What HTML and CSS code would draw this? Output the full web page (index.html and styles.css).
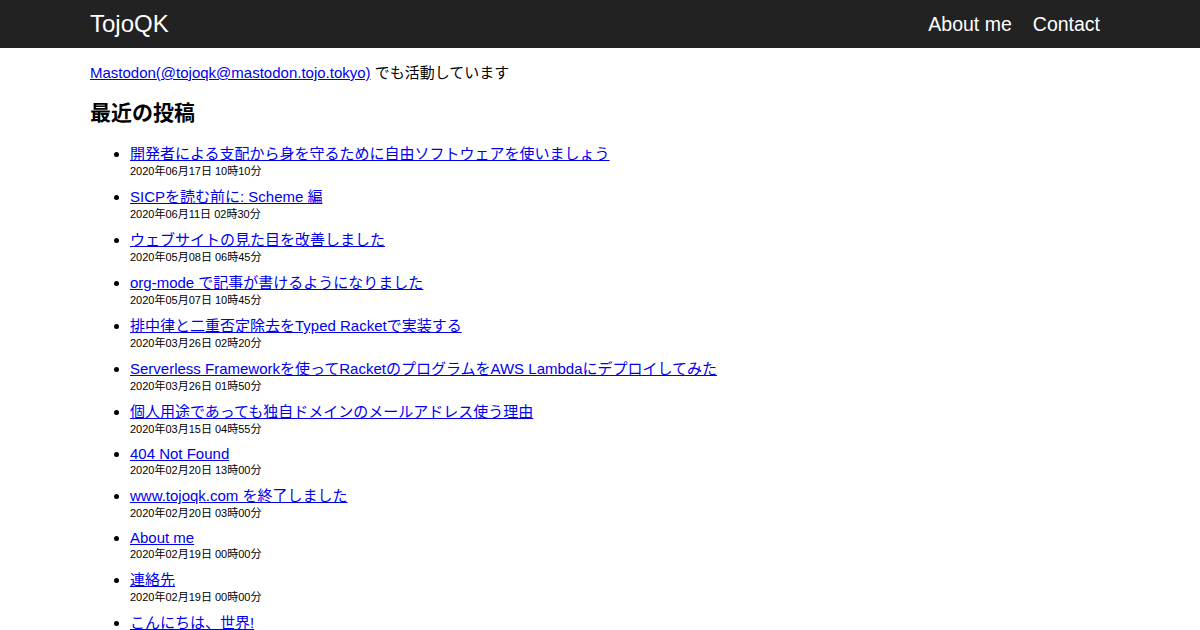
FILE: index.html
```
<!DOCTYPE html>
<html lang="ja">
<head>
    <meta charset="UTF-8">
    <meta name="viewport" content="width=device-width, initial-scale=1.0">
    <link rel="stylesheet" href="styles.css">
    <title>TojoQK</title>
</head>
<body>
    <div class="header">
        <div class="container header-inner">
            <a href="#" class="site-title">TojoQK</a>
            <div class="nav">
                <a href="#" class="nav-item">About me</a>
                <a href="#" class="nav-item">Contact</a>
            </div>
        </div>
    </div>
    <div class="container main">
        <p class="intro"><a href="#">Mastodon(@tojoqk@mastodon.tojo.tokyo)</a> でも活動しています</p>
        <h2 class="section-title">最近の投稿</h2>
        <ul class="posts">
            <li><a href="#">開発者による支配から身を守るために自由ソフトウェアを使いましょう</a><div class="date">2020年06月17日 10時10分</div></li>
            <li><a href="#">SICPを読む前に: Scheme 編</a><div class="date">2020年06月11日 02時30分</div></li>
            <li><a href="#">ウェブサイトの見た目を改善しました</a><div class="date">2020年05月08日 06時45分</div></li>
            <li><a href="#">org-mode で記事が書けるようになりました</a><div class="date">2020年05月07日 10時45分</div></li>
            <li><a href="#">排中律と二重否定除去をTyped Racketで実装する</a><div class="date">2020年03月26日 02時20分</div></li>
            <li><a href="#">Serverless Frameworkを使ってRacketのプログラムをAWS Lambdaにデプロイしてみた</a><div class="date">2020年03月26日 01時50分</div></li>
            <li><a href="#">個人用途であっても独自ドメインのメールアドレス使う理由</a><div class="date">2020年03月15日 04時55分</div></li>
            <li class="en"><a href="#">404 Not Found</a><div class="date">2020年02月20日 13時00分</div></li>
            <li><a href="#">www.tojoqk.com を終了しました</a><div class="date">2020年02月20日 03時00分</div></li>
            <li class="en"><a href="#">About me</a><div class="date">2020年02月19日 00時00分</div></li>
            <li><a href="#">連絡先</a><div class="date">2020年02月19日 00時00分</div></li>
            <li><a href="#">こんにちは、世界!</a><div class="date">2020年02月19日 00時00分</div></li>
        </ul>
    </div>
</body>
</html>
```

FILE: styles.css
```
body{
    margin: 0;
    padding: 0;
    font-family: "Liberation Sans", "Noto Sans CJK JP", sans-serif;
    font-size: 15px;
    color: black;
}
a{
    color: #0000ee;
}
.container{
    width: 1020px;
    margin: 0 auto;
}
.header{
    background-color: #222222;
    height: 48px;
}
.header-inner{
    height: 48px;
    display: flex;
    justify-content: space-between;
    align-items: center;
}
.site-title{
    color: white;
    text-decoration: none;
    font-size: 24px;
}
.nav{
    display: flex;
    gap: 21px;
    padding-right: 10px;
}
.nav-item{
    color: white;
    text-decoration: none;
    font-size: 19.5px;
}
.intro{
    margin: 15px 0 0 0;
    line-height: 20px;
}
.section-title{
    font-size: 21px;
    line-height: 26px;
    margin: 17px 0 0 0;
}
.posts{
    margin: 18px 0 0 0;
    padding-left: 40px;
}
.posts li{
    line-height: 20px;
    margin-bottom: 9px;
}
.posts li.en{
    line-height: 18px;
}
.date{
    font-size: 11px;
    line-height: 14px;
}
```
